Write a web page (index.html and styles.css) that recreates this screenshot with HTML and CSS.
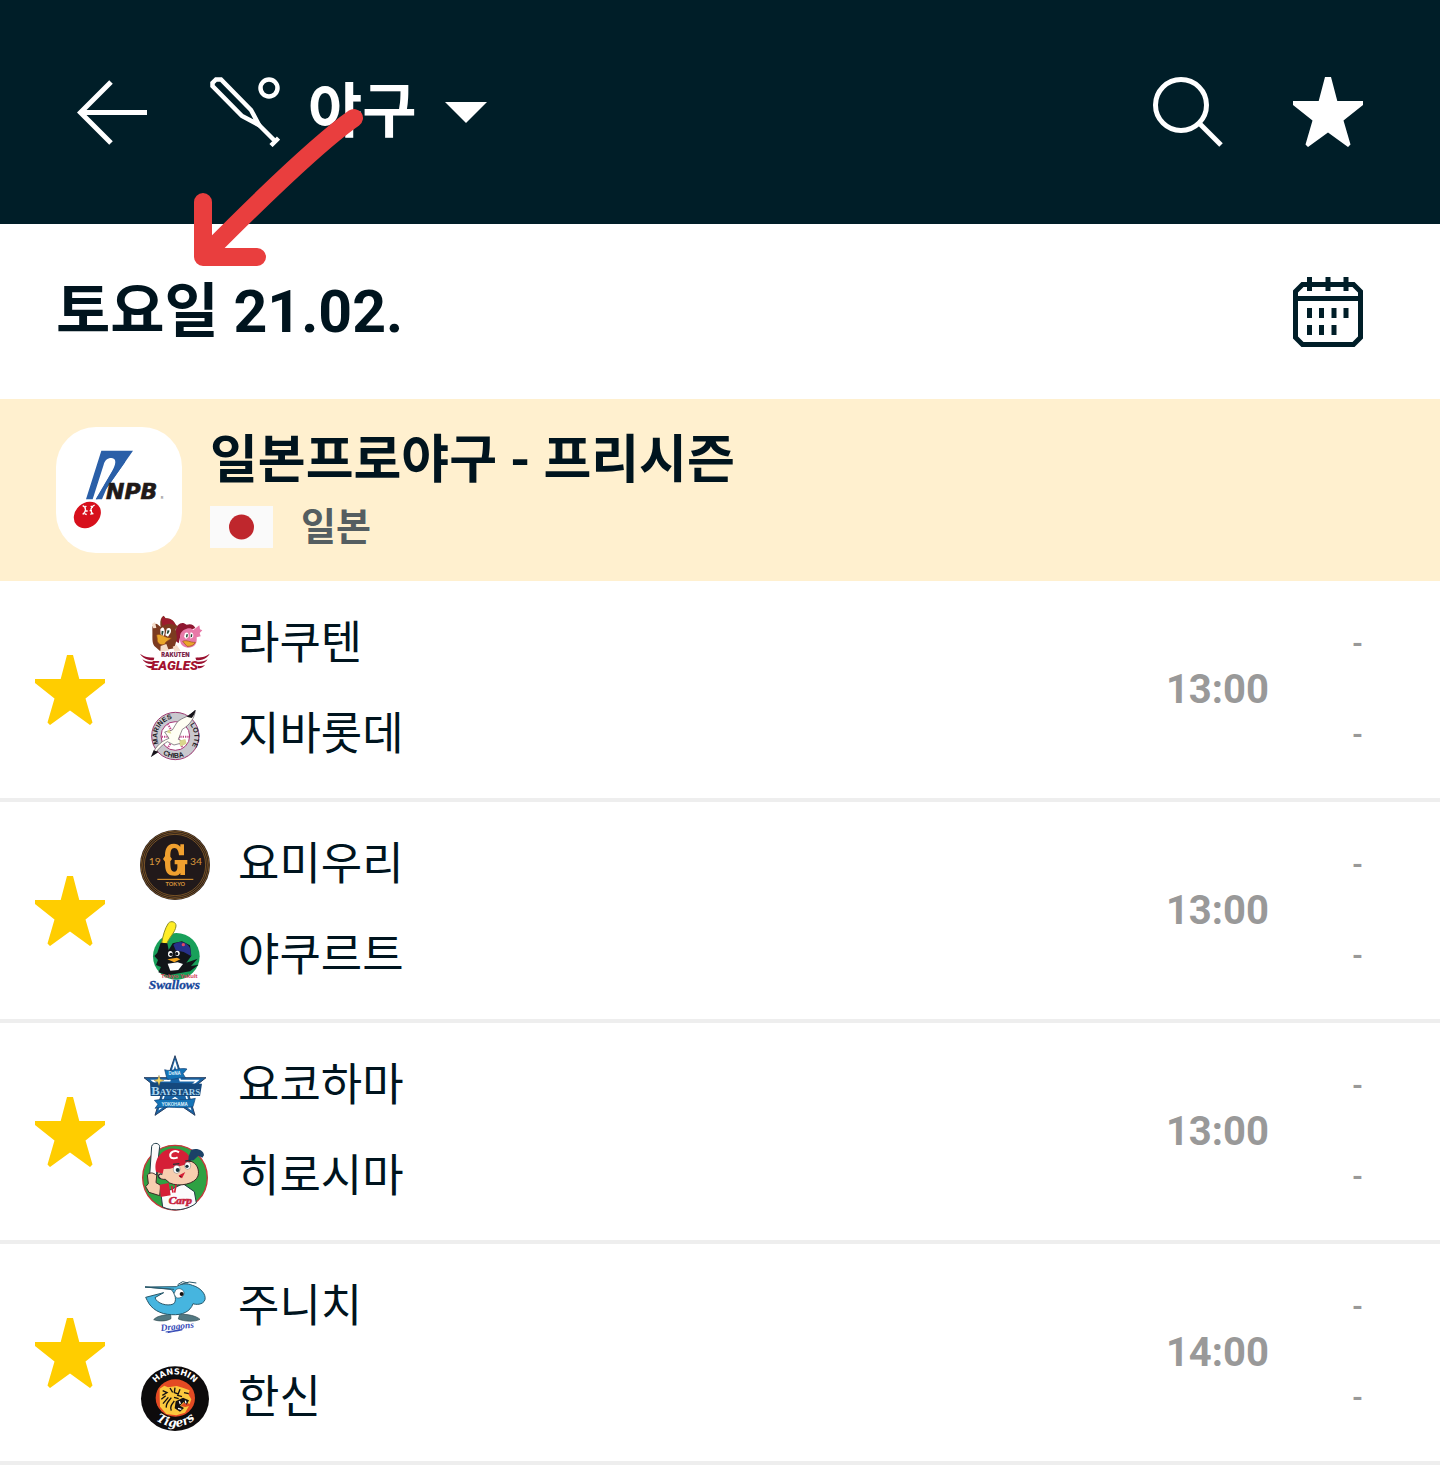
FILE: index.html
```html
<!DOCTYPE html>
<html lang="ko">
<head>
    <meta charset="UTF-8">
    <meta name="viewport" content="width=device-width, initial-scale=1.0">
    <title>야구</title>
    <link rel="stylesheet" href="styles.css">
</head>
<body>

    <!-- shared star shape -->
    <svg class="defs" width="0" height="0" aria-hidden="true">
        <symbol id="star" viewBox="0 0 70 70">
            <path d="M32 0h6l6.300 24H70v4L50.500 43.500 57.500 67.500 55 70 35 55.500 15 70 12.500 67.500 19.500 43.500 0 28v-4h25.700z"/>
        </symbol>
    </svg>

    <header class="topbar">
        <button class="icon-btn back" aria-label="뒤로">
            <svg viewBox="0 0 70 70" fill="none" stroke="currentColor" stroke-width="5"><path d="M34 5 3.500 35.500 34 66M3 35.500h67"/></svg>
        </button>
        <label class="sport">
            <svg class="bat" viewBox="0 0 70 70" fill="none" stroke="currentColor" stroke-width="4.500" aria-hidden="true">
                <path d="M2.500 9V6L6 2.500h5L41 33l8 15-17-9z"/>
                <path d="M48 47 65 64M61 68.500l7.500-7.500"/>
                <circle cx="59" cy="11" r="8.500"/>
            </svg>
            <select aria-label="종목">
                <option>야구</option>
            </select>
            <svg class="caret" viewBox="0 0 42 21" fill="currentColor" aria-hidden="true"><path d="M0 0h42L21 21z"/></svg>
        </label>
        <button class="icon-btn" aria-label="검색">
            <svg viewBox="0 0 70 70" fill="none" stroke="currentColor" stroke-width="5"><circle cx="28" cy="28" r="25.500"/><path d="M46 46l22 22"/></svg>
        </button>
        <button class="icon-btn" aria-label="즐겨찾기">
            <svg fill="currentColor"><use href="#star"/></svg>
        </button>
    </header>

    <svg class="pointer" viewBox="0 0 180 166" aria-hidden="true">
        <path d="M167 17Q124 47 17 155M16 101v55h54"/>
    </svg>

    <div class="daybar">
        <h1>토요일 21.02.</h1>
        <button class="icon-btn" aria-label="달력">
            <svg viewBox="0 0 70 70" fill="none" stroke="currentColor" stroke-width="5">
                <path d="M9.500 7.500h51l7 7v46l-7 7h-51l-7-7v-46zM2.500 21.500h65M16.500 0v14M35 0v14M53 0v14"/>
                <path d="M16.500 31v10M28.500 31v10M41 31v10M53 31v10M16.500 48v10M28.500 48v10M41 48v10"/>
            </svg>
        </button>
    </div>

    <section class="league">
        <svg class="league-logo" viewBox="48 52 378 378" role="img" aria-label="NPB">
            <path fill="#2a5fa8" d="M184 123h95l-82 117-25 29h-5l50-86c16-28 8-38-3-38-12 0-20 8-23 20l-33 104h-20z"/>
            <path fill="#2a5fa8" d="M232 160l24-4-56 80-14 33h-18z"/>
            <ellipse cx="142" cy="316" rx="44" ry="36" transform="rotate(-42 142 316)" fill="#d7101c"/>
            <path fill="none" stroke="#fff" stroke-width="4" d="M128 288c13 6 9 20 0 26M164 286c-14 6-14 20-4 28M133 294l6-5M136 304h7M134 312l6 3M159 293l-7-4M156 303h-7M157 311l-6 3"/>
            <text x="198" y="269" class="npb-text">NPB</text>
            <text x="362" y="267" class="npb-reg">R</text>
        </svg>
        <div class="league-info">
            <h2>일본프로야구 - 프리시즌</h2>
            <p class="country">
                <svg class="flag" viewBox="0 0 63 42" aria-hidden="true"><path fill="#fafafa" d="M0 0h63v42H0z"/><circle cx="31.500" cy="21" r="12.500" fill="#bf272d"/></svg>
                <span>일본</span>
            </p>
        </div>
    </section>

    <main>
        <article class="match">
            <button class="fav" aria-label="즐겨찾기"><svg><use href="#star"/></svg></button>
            <div class="teams">
                <div class="team">
                    <!-- Rakuten Eagles -->
                    <svg viewBox="30 27 210 210" aria-hidden="true">
                        <path fill="#8f1731" d="M138 90c0-14 14-24 24-20l8 4c12-4 22 0 26 10l-20 8-24 12-6 26-10-8z"/>
                        <path fill="#7b3a20" d="M67 86c-1-12 9-20 18-11l7 6c-2-10-2-22 4-30l5-4 6 8c14-2 26 8 31 20l6 4-7 8 4 28-8 30-43 8-17-15c-8-12-5-24-6-52z"/>
                        <path fill="#9d1c2e" d="M94 58l7-10 6 8c14-2 26 8 31 22-12-8-26-8-40 0z"/>
                        <path fill="#e879a8" d="M152 100c6-12 28-22 38-10l18-14 2 12 7 3-8 8 3 10-12 3c2 22-8 31-26 31-20 0-29-17-22-43z"/>
                        <path fill="#fff" d="M91 88c7-11 14-5 13 10l-3 14-9-3zM110 86c10-6 16 2 12 12l-8 12-8-4zM165 99c8-5 12 1 11 12l-8 6-6-7zM181 98c8-2 11 6 8 14l-8 4z"/>
                        <path fill="#243" d="M95 92l6 2-3 12-4-3zM113 90l6 2-5 10-4-2zM169 103h5l-2 9h-4zM183 103h4l-1 8-4 1z"/>
                        <path fill="#eaa62a" stroke="#9b4d18" stroke-width="2" d="M80 105c12-7 20 8 44 9-8 8-17 9-20 19-12 5-24-4-22-15zM158 124c12-6 22 4 38 3-4 9-14 13-25 12z"/>
                        <path fill="#f5ddca" d="M66 72l9-6 4 18-9 1zM92 138l17-6 8 20-26 3zM128 140l12-5 12 17-18 3z"/>
                        <path fill="#9a102f" d="M30 161c12 10 28 11 43 12l-2 8c-18 0-34-7-41-20zM37 178c12 7 22 8 33 7l-2 7c-15 1-25-4-31-14zM45 195c8 4 14 4 22 2v7c-9 2-17-2-22-9zM239 161c-12 10-28 11-43 12l3 8c18 0 34-7 40-20zM233 178c-12 7-22 8-33 7l2 7c15 1 25-4 31-14zM225 195c-8 4-14 4-22 2v7c9 2 17-2 22-9z"/>
                        <text x="136" y="171" class="eagles-small">RAKUTEN</text>
                        <text x="134" y="210" class="eagles-text">EAGLES</text>
                    </svg>
                    <span>라쿠텐</span>
                </div>
                <div class="team">
                    <!-- Chiba Lotte Marines -->
                    <svg viewBox="30 300 210 210" aria-hidden="true">
                        <circle cx="136" cy="408" r="71" fill="#c9c8ce" stroke="#9b3971" stroke-width="3"/>
                        <circle cx="136" cy="408" r="43" fill="#fff" stroke="#a63476" stroke-width="3"/>
                        <path fill="none" stroke="#c2478a" stroke-width="6" stroke-dasharray="4 3" d="M112 372c18 18 18 54 0 72M160 372c-18 18-18 54 0 72M95 410h82"/>
                        <path id="marines-top" fill="none" d="M86 431a55 55 0 0 1 68-73"/>
                        <path id="marines-right" fill="none" d="M180 374a56 56 0 0 1-4 76"/>
                        <path id="marines-bottom" fill="none" d="M91 455a66 66 0 0 0 89 3"/>
                        <path fill="#fffef4" stroke="#57505a" stroke-width="2" d="M64 470c8-22 24-45 53-55l-13-19 23-6 14-23c17-17 38-15 55-37-1 23-17 45-39 58l-12 30 18 9-31 8-20-10c-21 11-32 32-48 45z"/>
                        <path fill="#16131a" d="M196 330l-26 20 15 4c7-8 11-16 11-24zM64 470l7-19 15 5z"/>
                        <path fill="#d9d58c" d="M148 422l18-5 4 14-19 9zM110 397l8-10 6 14z"/>
                        <g class="marines-text">
                            <text><textPath href="#marines-top">MARINES</textPath></text>
                            <text><textPath href="#marines-right">LOTTE</textPath></text>
                            <text><textPath href="#marines-bottom" startOffset="10">CHIBA</textPath></text>
                        </g>
                    </svg>
                    <span>지바롯데</span>
                </div>
            </div>
            <time>13:00</time>
            <div class="scores"><span>-</span><span>-</span></div>
        </article>

        <article class="match">
            <button class="fav" aria-label="즐겨찾기"><svg><use href="#star"/></svg></button>
            <div class="teams">
                <div class="team">
                    <!-- Yomiuri Giants -->
                    <svg viewBox="30 30 210 210" aria-hidden="true">
                        <circle cx="135" cy="135" r="105" fill="#21191a"/>
                        <g fill="none" stroke="#a5702b" stroke-width="2"><circle cx="135" cy="135" r="102"/><circle cx="135" cy="135" r="97"/><circle cx="135" cy="135" r="92"/></g>
                        <path fill="#f0a02f" d="M132 71c-25 0-27 24-27 37l-6 9 6 8c0 28 4 42 30 42 9 0 13-3 16-8v6h14v-32h7v-13h-38v13h8c1 15-1 22-9 22-10 0-12-9-12-31l5-7-5-7c0-18 3-26 12-26s13 10 14 22h15V73h-11v7c-5-6-11-9-19-9z"/>
                        <path stroke="#f0a02f" stroke-width="3" d="M82 178h108"/>
                        <g class="giants-text">
                            <text x="74" y="135">19</text>
                            <text x="198" y="135">34</text>
                            <text x="136" y="199" class="giants-city">TOKYO</text>
                        </g>
                    </svg>
                    <span>요미우리</span>
                </div>
                <div class="team">
                    <!-- Yakult Swallows -->
                    <svg viewBox="30 27 210 210" aria-hidden="true">
                        <circle cx="139" cy="133" r="70" fill="#18a05a"/>
                        <path fill="#ffed25" stroke="#8a8b28" stroke-width="3" d="M115 34c8-10 24-4 23 8-2 20-22 35-28 54l-15-3c4-23 10-44 20-59z"/>
                        <path fill="#111519" d="M92 92l20 2 4 20 12-20 28-6 24 12 4 32-15 20 34-12-20 22 23-4-26 20-66 12-29-9 8-16-15-6 6-15-11-12 9-10z"/>
                        <path fill="#27318a" d="M130 98c18-16 46-6 51 13l2 21-22-12-24-5z"/>
                        <circle cx="160" cy="98" r="5" fill="#e04667"/>
                        <ellipse cx="121" cy="126" rx="7" ry="9" fill="#fff"/><ellipse cx="142" cy="124" rx="7" ry="8" fill="#fff"/>
                        <circle cx="123" cy="127" r="5" fill="#111519"/><circle cx="140" cy="125" r="5" fill="#111519"/>
                        <path fill="#f3a41e" d="M112 142l29-5 10 5-18 9z"/>
                        <path fill="#fff" d="M113 155l30-4 16 5-14 18-24 2z"/>
                        <text x="148" y="197" class="yakult-text">Tokyo Yakult</text>
                        <text x="133" y="230" class="swallows-text">Swallows</text>
                    </svg>
                    <span>야쿠르트</span>
                </div>
            </div>
            <time>13:00</time>
            <div class="scores"><span>-</span><span>-</span></div>
        </article>

        <article class="match">
            <button class="fav" aria-label="즐겨찾기"><svg><use href="#star"/></svg></button>
            <div class="teams">
                <div class="team">
                    <!-- Yokohama BayStars -->
                    <svg viewBox="30 18 210 210" aria-hidden="true">
                        <path fill="#1763a5" stroke="#273f62" stroke-width="3" d="M135 32l22 66h71l-54 43 21 70-60-41-60 41 21-70-54-43h71z"/>
                        <path fill="none" stroke="#fff" stroke-width="5" d="M135 53l16 54h51l-38 31 16 52-45-32-45 32 16-52-38-31h51z"/>
                        <path fill="#1474b7" stroke="#143f73" stroke-width="2" d="M104 74c20 8 43-8 67-2l-12 14 8 13c-18-4-38 8-56 3zM73 166c40-8 80 4 123-6l-7 25c-38 8-74-4-114 5l9-12z"/>
                        <path fill="#15497d" d="M60 112l156 4-6 37H62z"/>
                        <text x="134" y="89" class="stars-ribbon">DeNA</text>
                        <text x="134" y="182" class="stars-ribbon">YOKOHAMA</text>
                        <text x="137" y="149" class="stars-text"><tspan class="stars-cap">B</tspan>AYSTARS</text>
                        <path fill="#f4d663" stroke="#6b5b24" d="M87 91l4 12 11 3-11 4-4 12-4-12-11-4 11-3z"/>
                    </svg>
                    <span>요코하마</span>
                </div>
                <div class="team">
                    <!-- Hiroshima Carp -->
                    <svg viewBox="30 21 210 210" aria-hidden="true">
                        <circle cx="135" cy="128" r="97" fill="#2fa143" stroke="#c53639" stroke-width="4"/>
                        <path fill="#fbfbfb" stroke="#213d49" stroke-width="3" d="M93 178l66-32 34 24 6 34c-24 20-67 28-101 12z"/>
                        <path fill="#fbfbfb" stroke="#213d49" stroke-width="3" d="M65 34c3-12 23-12 24 1L79 122H59z"/>
                        <path fill="#f7ceb0" stroke="#3d2925" stroke-width="3" d="M86 104l21-8 76-17c17 6 26 24 21 44-8 24-57 34-85 21l-13-11c-19 2-28-12-20-29zM52 120c10-12 23-4 28 2l-2 21 14 8-3 31-32-10-10-17 8-9z"/>
                        <path fill="#d51f37" d="M78 110c-9-41 23-72 56-69 25 1 40 12 48 30l-9 16-53 14-19 1-3 14zM89 149l27-5 6 37-30 5z"/>
                        <path fill="#1b4267" d="M176 64l8-20c19-6 38 3 38 17l-5 7-12-6-14 14-16 1z"/>
                        <path fill="none" stroke="#fff" stroke-width="6" d="M147 52c-12-9-29-1-26 12 3 8 14 7 22 3"/>
                        <ellipse cx="140" cy="103" rx="10" ry="12" fill="#fff" stroke="#263238"/><ellipse cx="173" cy="92" rx="9" ry="11" fill="#fff" stroke="#263238"/>
                        <circle cx="143" cy="105" r="6" fill="#17333b"/><circle cx="171" cy="94" r="5" fill="#17333b"/>
                        <path fill="none" stroke="#263238" stroke-width="4" d="M129 88l19-2M166 78l16-2M97 118c-11-6-17 10-4 13"/>
                        <path stroke="#d51f37" stroke-width="5" d="M147 124l13-7-6 12M125 153l4 20M138 149l-4 24"/>
                        <text x="151" y="208" class="carp-text">Carp</text>
                    </svg>
                    <span>히로시마</span>
                </div>
            </div>
            <time>13:00</time>
            <div class="scores"><span>-</span><span>-</span></div>
        </article>

        <article class="match">
            <button class="fav" aria-label="즐겨찾기"><svg><use href="#star"/></svg></button>
            <div class="teams">
                <div class="team">
                    <!-- Chunichi Dragons -->
                    <svg viewBox="30 6 210 210" aria-hidden="true">
                        <path fill="#527881" stroke="#344d53" stroke-width="2" d="M71 149c8-10 27-14 51-16l1 13c-13 8-36 9-52 3zM145 147l4-14c26-1 50 5 61 15-15 8-47 7-65-1z"/>
                        <path fill="#46b5df" stroke="#29586a" stroke-width="3" d="M45 51l94-1c11-8 32-12 48-4 23 6 42 26 38 43-6 17-29 15-36 12-8 24-32 35-64 33-36-1-62-18-73-42l-5-10 54-14-26 15c5 17 36 27 55 19 11-8 7-30-7-44z"/>
                        <path fill="#fff" stroke="#29586a" stroke-width="2" d="M137 60c9-9 25-2 25 9 0 10-12 18-23 14l-7-11z"/>
                        <circle cx="155" cy="72" r="6" fill="#111"/>
                        <path fill="none" stroke="#29586a" stroke-width="3" d="M45 51l87 7M143 44l15-9 16 4M153 43l25-7 21 3"/>
                        <text x="142" y="178" class="dragons-text" transform="rotate(-6 142 172)">Dragons</text>
                        <path fill="none" stroke="#354ab7" stroke-width="3" d="M107 186l50-7-44 9"/>
                    </svg>
                    <span>주니치</span>
                </div>
                <div class="team">
                    <!-- Hanshin Tigers -->
                    <svg viewBox="30 24 210 210" aria-hidden="true">
                        <ellipse cx="135" cy="131" rx="102" ry="97" fill="#0d0b0c"/>
                        <ellipse cx="136" cy="129" rx="59" ry="56" fill="#e34a23"/>
                        <path fill="#fbc83e" d="M89 101l14-9 11 5 26-4 18 5 21 8-4 12 9 15-5 14-15-6-12 12 14 3 11-3-12 20-26 8-30-4-19-22-1-28z"/>
                        <path fill="none" stroke="#141011" stroke-width="4" d="M98 107l13 6-14 8M94 133l13-11M99 146l16-19M109 158c-2-14 8-20 15-30M120 99l8 13M135 98l-2 15 12 4M150 103l-7 18 13 4M124 167c-6-12 2-20 9-29M132 127l14 4M162 113l14 3"/>
                        <path fill="#141011" d="M137 139l22-11 18 8-7 13-9-8-11 11 12 7-12 11-16-10z"/>
                        <path stroke="#fff" stroke-width="4" d="M148 139l3 8M166 137l2 8M144 160l10 3"/>
                        <path id="hanshin-arc" fill="none" d="M64 120a71 62 0 0 1 142 0"/>
                        <path id="tigers-arc" fill="none" d="M56 168a88 84 0 0 0 160-4"/>
                        <g class="hanshin-text">
                            <text><textPath href="#hanshin-arc" startOffset="50%">HANSHIN</textPath></text>
                            <text class="tigers-text"><textPath href="#tigers-arc" startOffset="50%">Tigers</textPath></text>
                        </g>
                    </svg>
                    <span>한신</span>
                </div>
            </div>
            <time>14:00</time>
            <div class="scores"><span>-</span><span>-</span></div>
        </article>
    </main>

</body>
</html>
```
FILE: styles.css
```css
* {
    box-sizing: border-box;
}

body {
    margin: 0;
    font-family: Roboto, "Noto Sans CJK KR", sans-serif;
    background-color: #fff;
    color: #001e28;
    position: relative;
}

h1, h2, p {
    margin: 0;
}

button {
    padding: 0;
    border: none;
    background: none;
    color: inherit;
    cursor: pointer;
}

svg {
    display: block;
    flex-shrink: 0;
}

.defs {
    position: absolute;
}

/* top bar */
.topbar {
    display: flex;
    align-items: center;
    gap: 70px;
    height: 224px;
    padding: 0 77px;
    background-color: #001e28;
    color: #fff;
}

.icon-btn svg,
.bat,
.fav svg,
.team svg {
    width: 70px;
    height: 70px;
}

.sport {
    display: flex;
    align-items: center;
    gap: 28px;
    margin-left: -7px;
    margin-right: auto;
}

.sport select {
    appearance: none;
    padding: 0;
    border: none;
    background: none;
    color: inherit;
    font-family: inherit;
    font-size: 59px;
    font-weight: 700;
    line-height: 84px;
}

.caret {
    width: 42px;
    height: 21px;
}

/* red arrow over the header */
.pointer {
    position: absolute;
    left: 187px;
    top: 101px;
    width: 180px;
    height: 166px;
    fill: none;
    stroke: #e93e3e;
    stroke-width: 18px;
    stroke-linecap: round;
    stroke-linejoin: round;
    pointer-events: none;
}

.daybar {
    display: flex;
    align-items: center;
    justify-content: space-between;
    height: 175px;
    padding: 0 77px 0 56px;
}

.daybar h1 {
    font-size: 59px;
    font-weight: 700;
    line-height: 84px;
    color: #00141e;
}

/* league header */
.league {
    display: flex;
    align-items: center;
    gap: 28px;
    padding: 28px 56px;
    background-color: #fff0cf;
}

.league-logo {
    width: 126px;
    height: 126px;
    border-radius: 40px;
    background-color: #fff;
}

.league h2 {
    font-size: 52px;
    font-weight: 700;
    line-height: 68px;
    color: #00141e;
}

.country {
    display: flex;
    align-items: center;
    gap: 28px;
    margin-top: 6px;
    font-size: 38px;
    font-weight: 700;
    line-height: 52px;
    color: #555e61;
}

.flag {
    width: 63px;
    height: 42px;
}

/* matches */
.match {
    display: flex;
    align-items: center;
    padding: 28px 77px 28px 35px;
    border-bottom: 4px solid #eee;
}

.fav {
    margin-right: 35px;
}

.fav svg {
    fill: #ffcd00;
}

.teams {
    display: flex;
    flex: 1;
    flex-direction: column;
    gap: 21px;
}

.team {
    display: flex;
    align-items: center;
    gap: 28px;
    height: 70px;
    font-size: 45px;
    line-height: 54px;
    color: #00141e;
}

.match time {
    font-size: 40px;
    font-weight: 700;
    color: #999;
}

.scores {
    display: flex;
    flex-direction: column;
    gap: 21px;
    width: 94px;
    text-align: right;
    font-size: 28px;
    font-weight: 700;
    line-height: 70px;
    color: #999;
}

/* lettering inside the logos */
.npb-text {
    font: italic 700 66px "DejaVu Sans", sans-serif;
    fill: #201918;
    stroke: #201918;
    stroke-width: 2px;
}

.npb-reg {
    font: 12px Inter, sans-serif;
    fill: #555;
}

.eagles-small {
    font: 900 17px Inter, sans-serif;
    text-anchor: middle;
    fill: #7b2748;
}

.eagles-text {
    font: italic 900 40px Roboto, sans-serif;
    text-anchor: middle;
    fill: #a3122f;
}

.marines-text {
    font: 700 21px "Liberation Sans", sans-serif;
    fill: #211b25;
}

.giants-text {
    font: 31px Lato, sans-serif;
    text-anchor: middle;
    fill: #d9963a;
}

.giants-city {
    font-size: 17px;
    font-weight: 700;
}

.yakult-text {
    font: 700 18px "Liberation Sans", sans-serif;
    text-anchor: middle;
    fill: #d43f5a;
}

.swallows-text {
    font: italic 700 40px "Liberation Serif", serif;
    text-anchor: middle;
    fill: #18479b;
    stroke: #18479b;
    stroke-width: 1px;
}

.stars-text {
    font: 700 27px "Liberation Serif", serif;
    text-anchor: middle;
    fill: #a8d5ef;
}

.stars-cap {
    font-size: 38px;
}

.stars-ribbon {
    font: 700 13px Inter, sans-serif;
    text-anchor: middle;
    fill: #d8eefa;
}

.carp-text {
    font: italic 700 34px "Liberation Serif", serif;
    text-anchor: middle;
    fill: #c71f3e;
    stroke: #c71f3e;
    stroke-width: 2px;
}

.dragons-text {
    font: italic 700 28px "Liberation Serif", serif;
    text-anchor: middle;
    fill: #354ab7;
}

.hanshin-text {
    font: 700 25px "DejaVu Sans", sans-serif;
    text-anchor: middle;
    fill: #fff;
}

.tigers-text {
    font: italic 700 36px "DejaVu Serif", serif;
}
```
